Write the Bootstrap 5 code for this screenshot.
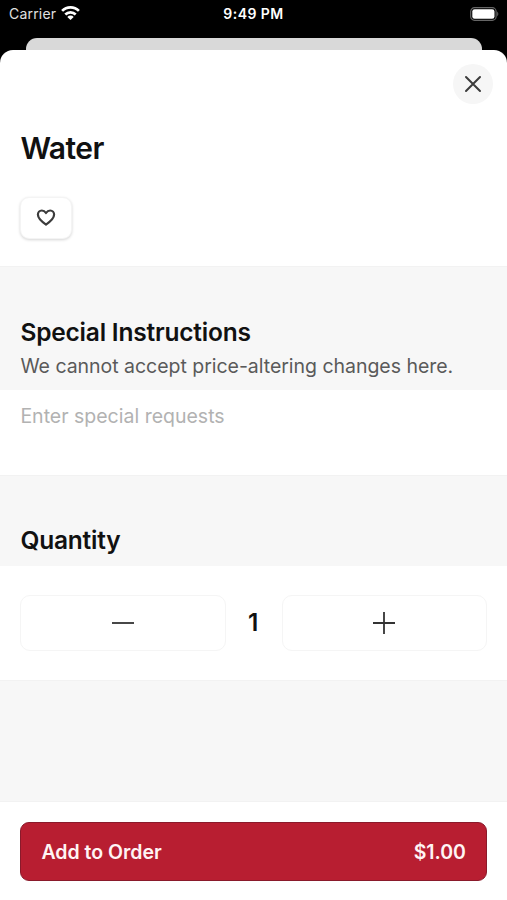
<!DOCTYPE html>
<html lang="en">
<head>
<meta charset="utf-8">
<meta name="viewport" content="width=device-width, initial-scale=1">
<title>Water</title>
<link href="https://cdn.jsdelivr.net/npm/bootstrap@5.3.0/dist/css/bootstrap.min.css" rel="stylesheet">
<style>
body { font-family: Inter, "Liberation Sans", sans-serif; background: #000; color: #111; }
.screen { height: 900px; overflow: hidden; }
.status { height: 38px; padding: 0 7px 11px 9px; color: #e0e0e0; font-size: 14px; }
.status .carrier { letter-spacing: .2px; }
.status .carrier svg { margin-bottom: 2px; }
.status .clock { color: #fff; font-weight: 600; font-size: 14px; letter-spacing: .45px; }
.backdrop-sheet { height: 12px; margin: 0 25px 0 26px; background: #d9d9d9; border-radius: 11px 11px 0 0; }
.sheet { border-radius: 13px 13px 0 0; overflow: hidden; }
.side { padding-left: 20.4px; padding-right: 20px; }
.head { height: 216px; padding-top: 14px; padding-right: 14px; }
.close-btn { width: 40px; height: 40px; background: #f6f6f6; }
.title { font-size: 30px; line-height: 36px; margin-top: 26px; letter-spacing: -.55px; }
.like-btn { width: 52px; height: 42px; margin-top: 31px; border-radius: 9px; border: 1px solid #f4f4f4; box-shadow: 0 1px 3px rgba(0,0,0,.17); }
.like-btn svg { margin: 0 1px 1px 0; }
.band { background: #f7f7f7; }
.line-top { border-top: 1px solid #f2f2f2; }
.instructions { height: 124px; padding-bottom: 11px; }
.quantity { height: 91px; padding-bottom: 11px; }
.stepper { height: 114px; }
.heading { font-size: 24.5px; line-height: 30px; letter-spacing: -.2px; }
.note { font-size: 19.5px; line-height: 26px; margin-top: 6px; letter-spacing: -.03px; color: #5a5a5a; white-space: nowrap; }
.instructions .note { margin-bottom: 0; }
.request { height: 85px; padding-top: 13.4px; }
.request textarea { font-size: 19.5px; line-height: 26px; resize: none; }
.request textarea::placeholder { color: #b2b2b2; opacity: 1; }
.step-btn { height: 56px; border: 1.5px solid #f5f5f5; border-radius: 10px; }
.count { width: 56px; font-size: 24.5px; padding: 0 1px 1px 0; }
.footer-bar { height: 99px; padding-top: 20px; }
.order-btn, .order-btn:hover { height: 59px; padding: 2px 20px 0; border: 1.5px solid #8a1a2b; border-radius: 9px; background: #b81e31; color: #fff4f4; font-size: 19.5px; }
</style>
</head>
<body>
<div class="screen d-flex flex-column">
  <div class="status d-flex align-items-center position-relative">
    <div class="d-flex align-items-center carrier">
      <span>Carrier</span>
      <svg class="ms-1" width="21" height="16" viewBox="0 0 21 16" fill="none" stroke="#fff" stroke-width="2.7"><path d="M2.1 5.9a11.8 11.8 0 0 1 16.8 0M5.3 9.5a7.4 7.4 0 0 1 10.4 0"/><path d="M10.5 15 7.3 11.9a4.4 4.4 0 0 1 6.4 0z" fill="#fff" stroke="none"/></svg>
    </div>
    <span class="clock position-absolute start-50 translate-middle-x">9:49 PM</span>
    <svg class="ms-auto" width="30" height="14" viewBox="0 0 30 14"><rect x=".7" y=".7" width="25.4" height="12.6" rx="3.8" fill="none" stroke="#666" stroke-width="1.2"/><rect x="2.3" y="2.3" width="22.2" height="9.4" rx="2.3" fill="#fff"/><path d="M27.2 4.6q2.3 2.4 0 4.8z" fill="#666"/></svg>
  </div>
  <div class="backdrop-sheet flex-shrink-0"></div>
  <main class="sheet bg-white flex-grow-1 d-flex flex-column">
    <header class="head side flex-shrink-0">
      <div class="d-flex justify-content-end">
        <button class="close-btn btn border-0 rounded-circle p-0 d-flex align-items-center justify-content-center" aria-label="Close">
          <svg width="18" height="18" viewBox="0 0 18 18" fill="none" stroke="#3c3c3c" stroke-width="2" stroke-linecap="round"><path d="m2 2 14 14M16 2 2 16"/></svg>
        </button>
      </div>
      <h1 class="title fw-semibold mb-0">Water</h1>
      <button class="like-btn btn bg-white p-0 d-flex align-items-center justify-content-center" aria-label="Favorite">
        <svg width="20" height="18" viewBox="0 0 20 18" fill="none" stroke="#3c3c3c" stroke-width="2.2" stroke-linejoin="round"><path d="M10 4C8.8 2.2 7.4 1.5 5.8 1.5 3.5 1.5 1.9 3.3 1.9 5.6c0 3.9 3.7 7 8.1 10 4.4-3 8.1-6.1 8.1-10 0-2.3-1.6-4.1-3.9-4.1C12.600 1.500 11.200 2.200 10 4z"/></svg>
      </button>
    </header>
    <section class="instructions band line-top side flex-shrink-0 d-flex flex-column justify-content-end">
      <h2 class="heading fw-semibold mb-0">Special Instructions</h2>
      <p class="note">We cannot accept price-altering changes here.</p>
    </section>
    <div class="request side flex-shrink-0">
      <textarea class="form-control border-0 p-0 shadow-none bg-transparent" rows="2" placeholder="Enter special requests"></textarea>
    </div>
    <section class="quantity band line-top side flex-shrink-0 d-flex flex-column justify-content-end">
      <h2 class="heading fw-semibold mb-0">Quantity</h2>
    </section>
    <div class="stepper side flex-shrink-0 d-flex align-items-center">
      <button class="step-btn btn flex-fill p-0 d-flex align-items-center justify-content-center" aria-label="Decrease"><svg width="22" height="22" viewBox="0 0 22 22" stroke="#333" stroke-width="1.8"><path d="M0 11h22"/></svg></button>
      <span class="count text-center fw-semibold">1</span>
      <button class="step-btn btn flex-fill p-0 d-flex align-items-center justify-content-center" aria-label="Increase"><svg width="22" height="22" viewBox="0 0 22 22" stroke="#333" stroke-width="1.8"><path d="M0 11h22M11 0v22"/></svg></button>
    </div>
    <div class="band line-top flex-grow-1"></div>
    <footer class="footer-bar line-top side flex-shrink-0">
      <button class="order-btn btn w-100 fw-semibold d-flex align-items-center justify-content-between"><span>Add to Order</span><span>$1.00</span></button>
    </footer>
  </main>
</div>
<script src="https://cdn.jsdelivr.net/npm/bootstrap@5.3.0/dist/js/bootstrap.bundle.min.js"></script>
</body>
</html>
